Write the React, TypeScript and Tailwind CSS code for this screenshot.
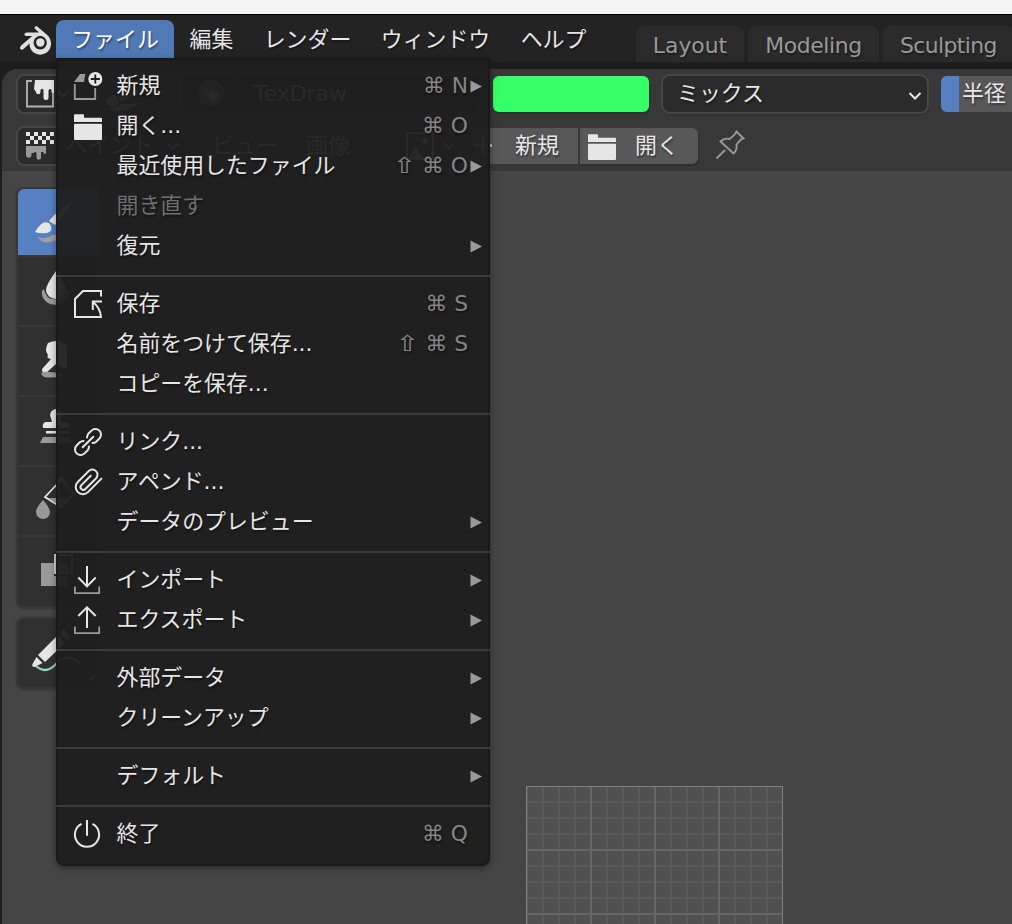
import React from "react";
import { SiBlender } from "react-icons/si";

const W = "#e6e6e6";
const G = "#999999";

type IconProps = { children: React.ReactNode; size?: number; box?: number };

function Icon({ children, size = 32, box = 32 }: IconProps) {
  return (
    <svg width={size} height={size} viewBox={`0 0 ${box} ${box}`} fill="none" className="block shrink-0">
      {children}
    </svg>
  );
}

const Folder = () => (
  <Icon>
    <path d="M2 12V5.3a1 1 0 0 1 1-1h8a1 1 0 0 1 1 1v2.4h17a1 1 0 0 1 1 1V12z" fill={W} />
    <rect x="2" y="13.7" width="28" height="16.3" rx="1" fill={W} />
  </Icon>
);

const icons: Record<string, React.ReactNode> = {
  new: (
    <Icon>
      <path d="M2.8 14v15h20.4V18" stroke={G} strokeWidth="1.8" />
      <path d="M2 12L8 4h5.5Q12 8 12.2 12z" fill={G} />
      <circle cx="23.3" cy="9" r="7" fill={W} />
      <path d="M23.3 4.5v9M18.8 9h9" stroke="#202020" strokeWidth="1.8" />
    </Icon>
  ),
  open: <Folder />,
  save: (
    <Icon>
      <path d="M29 8.500V3H11L3 11v18h26Q28.500 20 20.500 13.500M30 13.500h-9.200v8.500" stroke={W} strokeWidth="2" />
    </Icon>
  ),
  link: (
    <Icon>
      <g transform="translate(16 16) rotate(-45)" stroke={W} strokeWidth="2" strokeLinecap="round">
        <path d="M-2.500 -3.900A5.600 5.600 0 0 0 -6 -5.600H-10.500a5.600 5.600 0 0 0 0 11.200H-6a5.600 5.600 0 0 0 3.500 -1.700M2.500 3.900A5.600 5.600 0 0 0 6 5.600H10.500a5.600 5.600 0 0 0 0 -11.200H6a5.600 5.600 0 0 0 -3.500 1.700M-7.500 0H7.500" />
      </g>
    </Icon>
  ),
  clip: (
    <Icon>
      <g transform="translate(15.500 15) rotate(-45)" stroke={W} strokeWidth="2" strokeLinecap="round">
        <path d="M11.500 8.200H-7.500a7.200 7.200 0 0 1 0 -14.400H7.800a5.200 5.200 0 0 1 0 10.400H-7.200a2.800 2.800 0 0 1 0 -5.600H6" />
      </g>
    </Icon>
  ),
  import: (
    <Icon>
      <path d="M2.900 22.500v6.600h24.300v-6.600" stroke={G} strokeWidth="1.800" />
      <path d="M15 2v20M6.300 13.500L15 22.400l8.700-8.900" stroke={W} strokeWidth="2" />
    </Icon>
  ),
  export: (
    <Icon>
      <path d="M2.900 22.500v6.600h24.300v-6.600" stroke={G} strokeWidth="1.800" />
      <path d="M15 24V3.500M6.300 12L15 3.300l8.700 8.700" stroke={W} strokeWidth="2" />
    </Icon>
  ),
  power: (
    <Icon>
      <path d="M15 2v15.700M9.500 5.900a12.100 12.100 0 1 0 11 0" stroke={W} strokeWidth="2" />
    </Icon>
  ),
};

type Item = { label: string; icon?: string; keys?: string; shift?: boolean; sub?: boolean; off?: boolean };

const groups: Item[][] = [
  [
    { label: "新規", icon: "new", keys: "⌘ N", sub: true },
    { label: "開く...", icon: "open", keys: "⌘ O" },
    { label: "最近使用したファイル", keys: "⌘ O", shift: true, sub: true },
    { label: "開き直す", off: true },
    { label: "復元", sub: true },
  ],
  [
    { label: "保存", icon: "save", keys: "⌘ S" },
    { label: "名前をつけて保存...", keys: "⌘ S", shift: true },
    { label: "コピーを保存..." },
  ],
  [
    { label: "リンク...", icon: "link" },
    { label: "アペンド...", icon: "clip" },
    { label: "データのプレビュー", sub: true },
  ],
  [
    { label: "インポート", icon: "import", sub: true },
    { label: "エクスポート", icon: "export", sub: true },
  ],
  [
    { label: "外部データ", sub: true },
    { label: "クリーンアップ", sub: true },
  ],
  [{ label: "デフォルト", sub: true }],
  [{ label: "終了", icon: "power", keys: "⌘ Q" }],
];

function MenuRow({ item }: { item: Item }) {
  return (
    <div className="flex h-10 items-center pl-4">
      <div className="h-8 w-[44.500px] shrink-0">{item.icon && icons[item.icon]}</div>
      <span className={item.off ? "grow text-[#6f6f6f]" : "grow text-[#e6e6e6]"}>{item.label}</span>
      {item.shift && <span className="mr-[9px] inline-block scale-x-130 text-[#858585]">⇧</span>}
      {item.keys && <span className="text-[21.800px] text-[#858585]">{item.keys}</span>}
      <div className="ml-[1.500px] flex w-[20.500px] shrink-0">
        {item.sub && (
          <svg width="13" height="13" viewBox="0 0 13 13" className="block">
            <path d="M0.500 0.500L12 6.500L0.500 12.500z" fill="#999" />
          </svg>
        )}
      </div>
    </div>
  );
}

function FileMenu() {
  return (
    <div className="absolute left-14 top-[58px] h-[808px] w-[434px] rounded-b-lg border-2 border-[#191919] bg-[#1f1f1ff2] pt-1.5 shadow-[0_2px_7px_rgba(0,0,0,0.4)]">
      <div className="-mx-0.5">
        {groups.map((g, i) => (
          <React.Fragment key={i}>
            {i > 0 && (
              <div className="flex h-[18px] items-center pt-0.5">
                <div className="h-0.5 w-full bg-[#3a3a3a]" />
              </div>
            )}
            {g.map((item) => (
              <MenuRow key={item.label} item={item} />
            ))}
          </React.Fragment>
        ))}
      </div>
    </div>
  );
}

function Chevron() {
  return (
    <svg width="14" height="10" viewBox="0 0 14 10" fill="none" className="block shrink-0">
      <path d="M1.500 2L7 7.500L12.500 2" stroke={W} strokeWidth="2" />
    </svg>
  );
}

function TopBar() {
  return (
    <div className="flex h-12 shrink-0 border-t border-black bg-[#232323] text-[#e6e6e6]">
      <div className="flex w-14 shrink-0 items-center pl-5 pt-[3px]">
        <SiBlender className="h-[35px] w-[31px]" preserveAspectRatio="none" color="#e0e0e0" />
      </div>
      <div className="mt-[5px] flex h-[38px] shrink-0">
        <div className="flex w-[118px] items-center justify-center rounded-t-lg bg-[#5079b5] pt-0.5 text-white">ファイル</div>
        <div className="flex w-[75px] items-center justify-center pt-0.5">編集</div>
        <div className="flex w-[117px] items-center justify-center pt-0.5">レンダー</div>
        <div className="flex w-[139px] items-center justify-center pt-0.5">ウィンドウ</div>
        <div className="flex w-[97px] items-center justify-center pt-0.5">ヘルプ</div>
      </div>
      <div className="ml-[34px] mt-[11px] flex h-9 shrink-0 gap-1 text-[#989898]">
        <div className="flex w-[108px] items-center justify-center rounded-t-lg bg-[#2b2b2b] pt-1">Layout</div>
        <div className="flex w-[131px] items-center justify-center rounded-t-lg bg-[#2b2b2b] pt-1 tracking-[-0.4px]">Modeling</div>
        <div className="flex w-[131px] items-center justify-center rounded-t-lg bg-[#2b2b2b] pt-1 tracking-[-0.6px]">Sculpting</div>
      </div>
    </div>
  );
}

function ToolSettings() {
  return (
    <div className="flex h-10 shrink-0">
      <div className="ml-3.5 flex h-10 w-[62px] shrink-0 items-center rounded-lg border-2 border-[#474747] bg-[#2b2b2b] pl-1.5">
        <Icon>
          <path d="M8 3H3v25.500h26V4" stroke="#b5b5b5" strokeWidth="1.800" />
          <path d="M11 2h19v12q-1 2.500-2.500 0v-2q-1.500-2-3 0.500v7a2.500 2.500 0 0 1-5 0V12q-1.500-2.500-3 0v2a2.200 2.200 0 0 1-4.500 0l-2-3z" fill={W} />
        </Icon>
        <Chevron />
      </div>
      <div className="ml-6 flex w-[42px] shrink-0 items-center pt-3.5">
        <svg width="40" height="20" viewBox="0 0 40 20" className="block">
          <path d="M3 11q7-12 14-3q1 6-4 7q-6 1-10-4z" fill={W} />
          <path d="M16 6l20-8v4L19 11zM8 16q6 1 12-3q10 0 18-1q-10 7-22 8q-7 0-8-4z" fill={W} />
        </svg>
      </div>
      <div className="ml-9 flex h-10 w-[302px] shrink-0 items-center rounded-lg border-2 border-[#474747] bg-[#232323]">
        <div className="flex w-[58px] justify-center border-r border-[#444]">
          <Icon>
            <circle cx="16" cy="15" r="13" fill="#777" />
            <path d="M7 9l8 8l-1-8l6 8l1-5l4 6l-8 7z" fill="#e0e0e0" />
          </Icon>
        </div>
        <span className="pl-3.5 text-[#e6e6e6]">TexDraw</span>
      </div>
      <div className="ml-[11px] mt-0.5 h-9 w-[156px] shrink-0 rounded-md bg-[#37ff68] shadow-[1px_2px_1px_#2f2f2f]" />
      <div className="ml-3 flex h-10 w-[268px] shrink-0 items-center justify-between rounded-[9px] border-2 border-[#474747] bg-[#2b2b2b] pl-3.5 pr-[5px] text-[#e6e6e6] shadow-[0_1px_1px_#303030]">
        <span>ミックス</span>
        <div className="pt-1">
          <Chevron />
        </div>
      </div>
      <div className="ml-3 mt-0.5 flex h-9 w-[75px] shrink-0 items-center overflow-hidden rounded-l-md bg-[#585858] text-[#e6e6e6]">
        <div className="h-full w-[18px] shrink-0 bg-[#5680c2]" />
        <span className="shrink-0 pl-[3px]">半径</span>
      </div>
    </div>
  );
}

function EditorHeader() {
  return (
    <div className="mt-3 flex h-10 shrink-0 items-center text-[#e6e6e6]">
      <div className="ml-3.5 flex h-10 w-[170px] shrink-0 items-center rounded-lg border-2 border-[#474747] bg-[#2b2b2b] pl-1.5">
        <Icon>
          {[0, 1, 2].map((r) =>
            [0, 1, 2, 3, 4, 5, 6].map((c) =>
              (r + c) % 2 === 0 ? <rect key={`${r}-${c}`} x={2 + c * 4} y={2 + r * 4} width="4" height="4" fill={W} /> : null
            )
          )}
          <path d="M2 16h20v7q-1 2-2.500 0v-1h-2.500v6a2.300 2.300 0 0 1-4.500 0v-5q-1.500-2-3 0h-2v2a2.500 2.500 0 0 1-5.500 0z" fill={G} />
        </Icon>
        <span className="shrink-0 pl-2.5 pr-3">ペイント</span>
        <Chevron />
      </div>
      <span className="ml-[26px] w-[94px] shrink-0">ビュー</span>
      <span className="w-[98px] shrink-0">画像</span>
      <Icon>
        <rect x="3" y="3" width="26" height="26" stroke={W} strokeWidth="2" />
        <path d="M4 29l7-13l8 13z" fill={W} />
        <circle cx="21" cy="11" r="3" fill={W} />
      </Icon>
      <div className="w-[38px] shrink-0 pl-1.5">
        <Chevron />
      </div>
      <div className="flex h-9 w-[104px] shrink-0 items-center bg-[#585858]">
        <svg width="18" height="18" viewBox="0 0 18 18" className="block shrink-0">
          <path d="M9 0v18M0 8.500h18" stroke={W} strokeWidth="2" />
        </svg>
        <span className="pl-[23px]">新規</span>
      </div>
      <div className="ml-0.5 flex h-9 w-[118px] shrink-0 items-center rounded-r-md bg-[#585858] pl-1.5 shadow-[1px_2px_1px_#2f2f2f]">
        <Folder />
        <span className="pl-[17px]">開く</span>
      </div>
      <div className="-mt-0.5 ml-4">
        <Icon>
          <path d="M2.500 29.500L11 21M22.500 2.500l7 7l-2 .5q-2 2-5 5.500q1 5.500-3 9L6.500 12.500q4-4 9-2.500q4-3 5.500-5z" stroke={G} strokeWidth="1.900" />
        </Icon>
      </div>
    </div>
  );
}

const tools: React.ReactNode[] = [
  <>
    <path d="M17 43q8-14 15-8q4 7-3 9q-7 1-12-1z" fill={W} />
    <path d="M31 32q9-11 22-19q2 2-16 23z" fill={W} />
    <path d="M20 48q8 3 14-2q8 0 18-2q-6 6-14 7q-14 6-18-3z" fill="#a0a0a0" />
  </>,
  <>
    <path d="M38 14q-10 14-10 19a10 9 0 0 0 20 0q0-5-10-19z" fill={W} />
    <path d="M26 32q-4 2-1 9q6 9 16 6q8-2 11-11q-1-4-3-2q-2 7-9 8q-12 2-14-10z" fill={G} />
  </>,
  <>
    <path d="M30 16q12-5 19 3v22h-6l-5-4l-10 9q-4 1-4-4l9-10q-5-1-3-4q-4-5 0-12z" fill={W} />
    <path d="M23 46q3-2 8-1q13 1 18 2q-10 5-23 3q-3-2-3-4z" fill={G} />
  </>,
  <>
    <path d="M38 12a6 6 0 0 1 5 9l-1 4h7q3 2 2 6H25q-1-4 2-6h7l-1-4a6 6 0 0 1 5-9zM28 34h23v2.500H28z" fill={W} />
    <path d="M25 40h27l2 6H22z" fill={G} />
  </>,
  <>
    <path d="M27 30l16-17l13 14l-13 13z" stroke={W} strokeWidth="1.800" />
    <path d="M31 31h22l-10 9zM25 33q-7 8-7 12a7 7 0 0 0 14 0q0-4-7-12z" fill={G} />
    <path d="M40 25V15q0-4 4-4q4 1 4 8" stroke={W} strokeWidth="1.800" />
  </>,
  <>
    <path d="M23 26h13v13h13v10H23z" fill={G} />
    <rect x="37" y="18" width="17" height="18" stroke={W} strokeWidth="1.800" />
    <path d="M38 35V23q12 1 13 12z" fill={G} />
  </>,
];

function Toolbar() {
  return (
    <div className="ml-3.5 w-[85px] shrink-0 pt-4">
      <div className="overflow-hidden rounded-lg border-2 border-[#373737] bg-[#303030] shadow-[0_1px_2px_#333]">
        {tools.map((t, i) => (
          <div
            key={i}
            className={
              i === 0
                ? "h-[68px] border-b-2 border-[#383838] bg-[#5680c2]"
                : i === 5
                  ? "h-[69px]"
                  : "h-[70px] border-b-2 border-[#383838]"
            }
          >
            <svg width="80" height="66" viewBox="0 0 80 66" fill="none" className="block">
              {t}
            </svg>
          </div>
        ))}
      </div>
      <div className="mt-[9px] h-[72px] rounded-lg border-2 border-[#373737] bg-[#303030] shadow-[0_1px_2px_#333]">
        <svg width="80" height="68" viewBox="0 0 80 68" fill="none" className="block">
          <path d="M17 46q10 10 20 0q13-15 26 0" stroke="#8fd9ac" strokeWidth="2.200" />
          <path d="M20 36L40 16l7 8l-20 19zM18.500 38l6 6l-8 4q-3 0-2-3zM42 14l4-4l6 7l-3 4z" fill={W} />
          <path d="M77 54v7h-7z" fill={G} />
        </svg>
      </div>
    </div>
  );
}

function CanvasImage() {
  const lines: React.ReactNode[] = [];
  for (let pass = 0; pass < 2; pass++) {
    for (let i = 1; i < 16; i++) {
      if ((i % 4 === 0) !== (pass === 1)) continue;
      const c = pass ? "#666666" : "#5a5a5a";
      lines.push(<rect key={`v${i}`} x={i * 16} y="1" width="2" height="256" fill={c} />);
      lines.push(<rect key={`h${i}`} x="1" y={i * 16 - 1} width="255" height="2" fill={c} />);
    }
  }
  return (
    <svg width="257" height="138" viewBox="0 0 257 138" className="absolute left-[524px] top-[615px] block">
      <rect x="0.500" y="0.500" width="256" height="256" fill="#505050" stroke="#808080" />
      <rect x="1" y="1" width="1" height="256" fill="#606060" />
      {lines}
    </svg>
  );
}

export default function App() {
  return (
    <div className="relative flex h-[924px] w-[1012px] flex-col overflow-hidden bg-[#1d1d1d] font-['DejaVu_Sans','Noto_Sans_CJK_JP',sans-serif] text-[21.900px] leading-8 whitespace-nowrap [text-shadow:1px_2px_2px_rgba(0,0,0,0.4)]">
      <div className="h-3.5 shrink-0 bg-[#f5f5f5]" />
      <TopBar />
      <div className="ml-0.5 mt-[7px] flex grow flex-col overflow-hidden rounded-tl-2xl bg-[#454545]">
        <div className="h-[102px] shrink-0 bg-[#383838] pt-[5px]">
          <ToolSettings />
          <EditorHeader />
        </div>
        <div className="flex grow">
          <Toolbar />
        </div>
      </div>
      <div className="pointer-events-none absolute left-0.5 top-[171px] h-[753px] w-[1010px]">
        <CanvasImage />
      </div>
      <FileMenu />
    </div>
  );
}
